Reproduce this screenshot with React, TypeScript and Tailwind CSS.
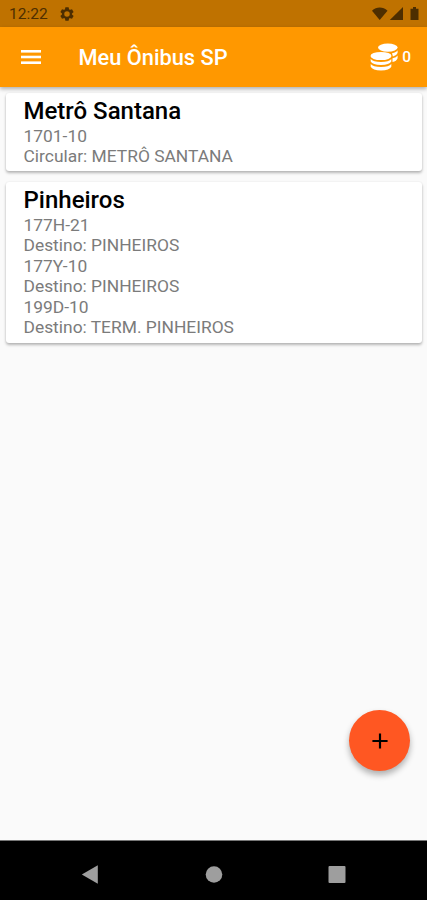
import { MdAdd } from "react-icons/md";

type Stop = { name: string; lines: string[] };

const stops: Stop[] = [
  { name: "Metrô Santana", lines: ["1701-10", "Circular: METRÔ SANTANA"] },
  {
    name: "Pinheiros",
    lines: [
      "177H-21",
      "Destino: PINHEIROS",
      "177Y-10",
      "Destino: PINHEIROS",
      "199D-10",
      "Destino: TERM. PINHEIROS",
    ],
  },
];

const gearTeeth = [0, 60, 120, 180, 240, 300];

function GearIcon() {
  return (
    <svg className="ml-[12px] mt-[1px] size-[14px]" viewBox="-7 -7 14 14">
      {gearTeeth.map((angle) => (
        <path key={angle} d="M-1.6-6.7H1.6L2.2-4H-2.2Z" fill="currentColor" transform={`rotate(${angle})`} />
      ))}
      <circle r="3.9" fill="none" stroke="currentColor" strokeWidth="2.3" />
    </svg>
  );
}

function MenuIcon() {
  return (
    <svg className="ml-[3.5px] mt-px h-[14px] w-5" viewBox="0 0 20 14" fill="currentColor">
      <rect y="0" width="20" height="2.6" />
      <rect y="5.7" width="20" height="2.6" />
      <rect y="11.4" width="20" height="2.6" />
    </svg>
  );
}

function CoinsIcon() {
  return (
    <svg className="ml-auto h-7 w-[29px]" viewBox="0 0 29 28" fill="currentColor">
      <ellipse cx="17.8" cy="4.6" rx="9.8" ry="4.1" />
      <path d="M22 10.2Q26.5 9.300 27.6 7.300V10Q26.6 12.800 22.900 13.600Z" />
      <path d="M22.500 15.200Q26.5 14.300 27.6 12.400V15.300Q26.6 18.200 22.500 19Z" />
      <ellipse cx="11" cy="13" rx="10.5" ry="4.1" />
      <path d="M.7 16Q3 18.900 11 18.900T21.300 16V18.500Q19.500 21.900 11 21.900T.7 18.500Z" />
      <path d="M.7 21Q3 23.900 11 23.900T21.300 21V23.800Q19.500 27.500 11 27.500T.7 23.800Z" />
    </svg>
  );
}

function StatusBar() {
  return (
    <div className="flex h-[26.5px] shrink-0 items-center bg-[#bf7200] pl-[9px] pr-[7px] text-[#4d2e00]">
      <span className="pt-[2px] text-[15.5px] leading-none">12:22</span>
      <GearIcon />
      <svg className="ml-auto mt-px h-[13px] w-[49px]" viewBox="0 0 49 13" fill="currentColor">
        <path d="M1 3.7C5.5-.5 12-.5 16.5 3.7L8.7 13Z" />
        <path d="M32 0V13H18.8Z" />
        <path d="M39.5 1.7H42V0H45V1.7H47.5V13H39.5Z" />
      </svg>
    </div>
  );
}

function StopCard({ stop }: { stop: Stop }) {
  return (
    <section className="rounded-[3px] bg-white pb-[4.6px] pl-[17.5px] pt-[4px] shadow-[0_2px_3px_rgba(0,0,0,0.27),0_0_2px_rgba(0,0,0,0.08)]">
      <h2 className="text-[24px] font-medium leading-[28.5px] text-black">{stop.name}</h2>
      {stop.lines.map((line, i) => (
        <p key={i} className="text-[17.4px] leading-[20.55px] text-[#7b7b7b]">
          {line}
        </p>
      ))}
    </section>
  );
}

export default function App() {
  return (
    <div className="flex h-[900px] w-[427px] flex-col overflow-hidden bg-[#fafafa] font-['Roboto',sans-serif]">
      <StatusBar />
      <header className="z-10 flex h-[60.5px] shrink-0 items-center bg-[#ff9800] pl-[17.5px] pr-[16px] text-white shadow-[0_2px_4px_rgba(0,0,0,0.3)]">
        <MenuIcon />
        <h1 className="ml-[37.5px] pt-[2px] text-[21.8px] font-medium leading-none">Meu Ônibus SP</h1>
        <CoinsIcon />
        <span className="ml-[3px] pt-[2px] text-[15.5px] font-medium leading-none">0</span>
      </header>
      <main className="flex grow flex-col gap-[11px] pl-[6px] pr-[5px] pt-[6px]">
        {stops.map((stop) => (
          <StopCard key={stop.name} stop={stop} />
        ))}
        <button className="mb-[69px] mr-[12px] mt-auto flex size-[61px] items-center justify-center self-end rounded-full bg-[#ff5722] text-black shadow-[0_4px_6px_rgba(0,0,0,0.3)]">
          <MdAdd className="size-[26px]" />
        </button>
      </main>
      <nav className="h-[60px] shrink-0 border-t border-[#777] bg-black">
        <svg className="h-[59px] w-full" viewBox="0 841 427 59" fill="#9e9e9e">
          <path d="M97.8 865.3V883.7L81.8 874.5Z" />
          <circle cx="214" cy="874.5" r="8.3" />
          <rect x="328.5" y="866" width="17" height="17" rx="1" />
        </svg>
      </nav>
    </div>
  );
}
